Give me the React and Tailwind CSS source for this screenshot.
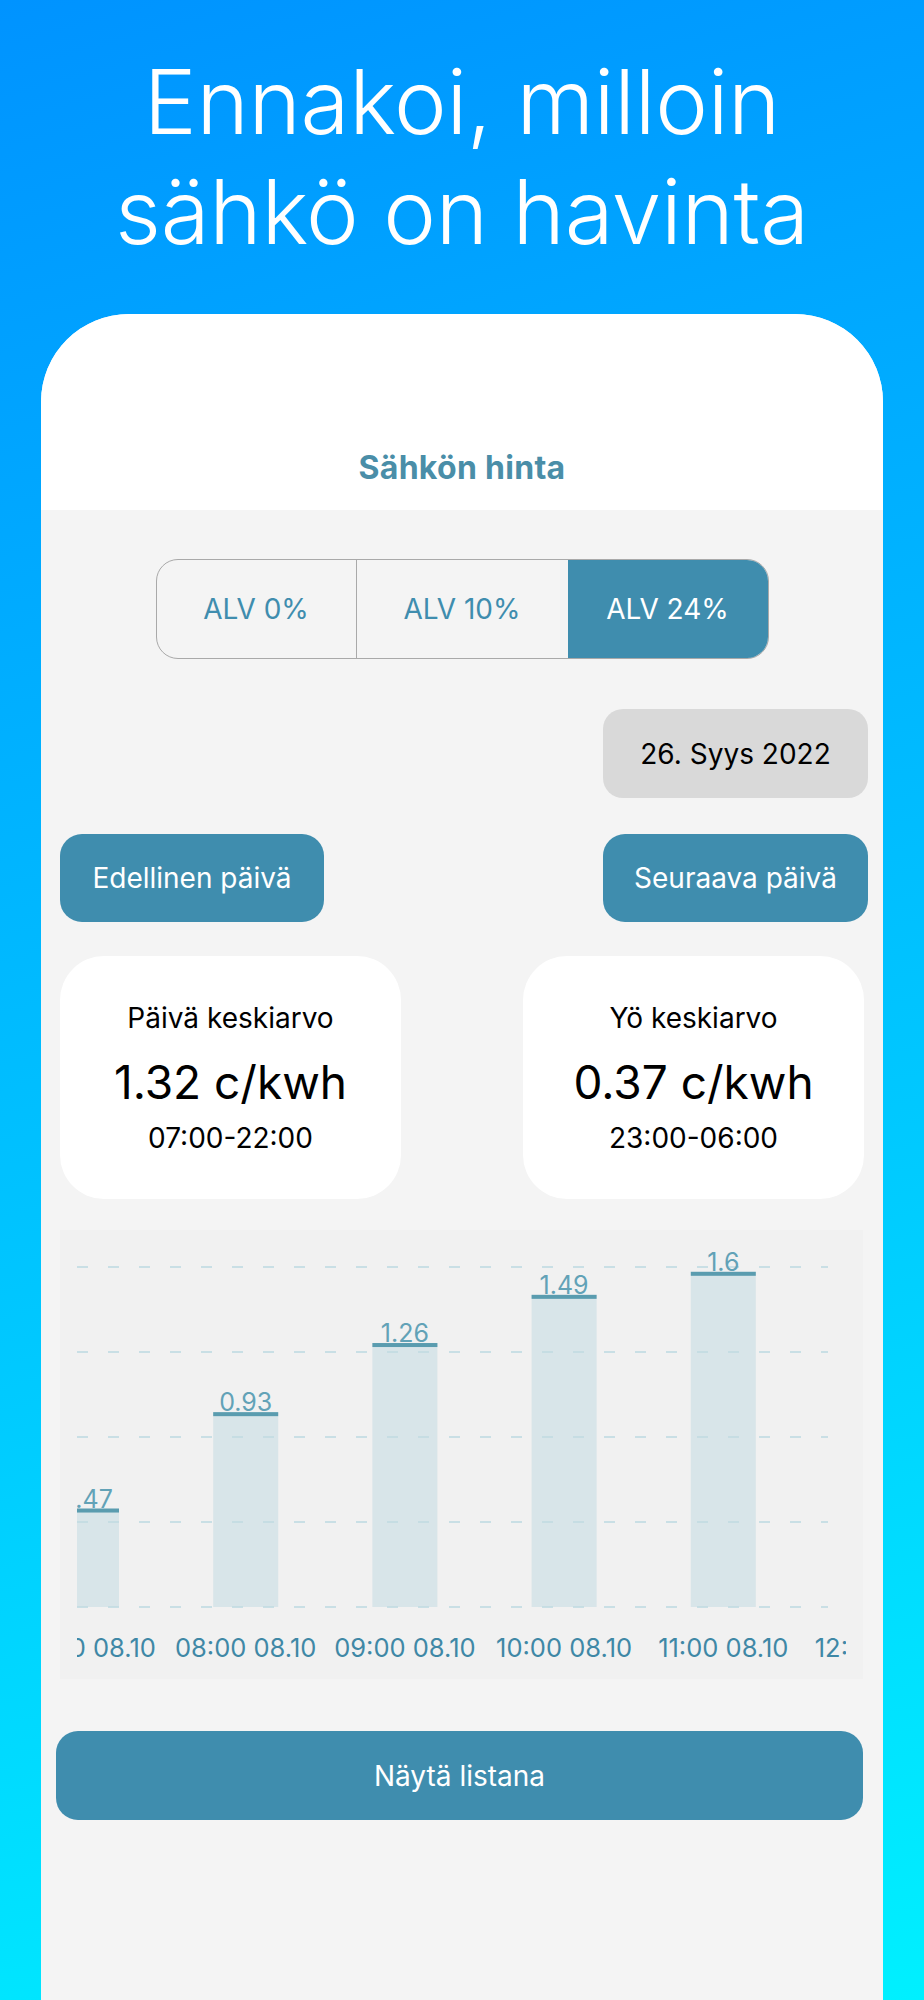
/**
 * Electricity price screen — marketing mockup
 */

const bars = [
  { label: "07:00 08.10", value: 0.47 },
  { label: "08:00 08.10", value: 0.93 },
  { label: "09:00 08.10", value: 1.26 },
  { label: "10:00 08.10", value: 1.49 },
  { label: "11:00 08.10", value: 1.6 },
  { label: "12:00 08.10", value: null },
];

function PriceChart() {
  const base = 377;
  const unit = 209.5;
  const gridY = [37, 122, 207, 292, 377];

  return (
    <svg width="803" height="449" viewBox="0 0 803 449" className="block">
      <defs>
        <clipPath id="plot">
          <rect x="17" y="0" width="769" height="449" />
        </clipPath>
      </defs>
      {gridY.map((y) => (
        <line key={y} x1="17" x2="768" y1={y} y2={y} stroke="#c9dfe5" strokeWidth="2" strokeDasharray="11 20" />
      ))}
      <g clipPath="url(#plot)">
        {bars.map((b, i) => {
          const cx = 26.5 + i * 159.2;
          if (b.value == null) {
            return (
              <text key={i} x={cx} y="427" textAnchor="middle" fontSize="25.5" fill="#3f88a6">
                {b.label}
              </text>
            );
          }
          const top = base - b.value * unit;
          return (
            <g key={i}>
              <rect x={cx - 32.5} y={top} width="65" height={base - top} fill="#c2dbe2" fillOpacity="0.55" />
              <rect x={cx - 32.5} y={top} width="65" height="4" fill="#5a9caf" />
              <text x={cx} y={top - 1} textAnchor="middle" fontSize="25" fill="#62a2b7">
                {String(b.value)}
              </text>
              <text x={cx} y="427" textAnchor="middle" fontSize="25.5" fill="#3f88a6">
                {b.label}
              </text>
            </g>
          );
        })}
      </g>
    </svg>
  );
}

function StatCard({ title, value, hours }) {
  return (
    <div className="w-[341px] h-[243px] bg-white rounded-[44px] flex flex-col items-center justify-center text-black">
      <div className="text-[28px] leading-[32px]">{title}</div>
      <div className="text-[46px] leading-[56px] mt-[20px]">{value}</div>
      <div className="text-[28px] leading-[32px] mt-[12px]">{hours}</div>
    </div>
  );
}

export default function App() {
  return (
    <div
      className="w-[924px] h-[2000px] overflow-hidden bg-[linear-gradient(165deg,#0093ff_0%,#00c8ff_60%,#00f0ff_100%)]"
      style={{ fontFamily: "Inter, 'Noto Sans', sans-serif" }}
    >
      {/* Headline */}
      <h1 className="pt-[47px] text-center text-white font-light text-[89px] leading-[110px] tracking-[-0.3px]">
        Ennakoi, milloin
        <br />
        sähkö on havinta
      </h1>

      {/* Phone card */}
      <div className="mx-[41px] mt-[47px] h-[1686px] rounded-t-[88px] bg-[#f4f4f4] overflow-hidden flex flex-col">
        <div className="bg-white pt-[136px] pb-[24px] text-center">
          <h2 className="text-[32px] leading-[36px] font-bold text-[#4a8ea8] tracking-[0.3px]">Sähkön hinta</h2>
        </div>

        {/* VAT selector */}
        <div className="mt-[49px] self-center flex h-[100px] rounded-[22px] border border-[#a9a9a9] overflow-hidden text-[28px]">
          <div className="w-[200px] flex items-center justify-center text-[#3f8dae] border-r border-[#a9a9a9]">ALV 0%</div>
          <div className="w-[211px] flex items-center justify-center text-[#3f8dae]">ALV 10%</div>
          <div className="w-[200px] flex items-center justify-center bg-[#3f8dae] text-white">ALV 24%</div>
        </div>

        {/* Date */}
        <div className="mt-[50px] mr-[15px] self-end w-[265px] h-[89px] rounded-[20px] bg-[#d9d9d9] flex items-center justify-center text-[28px] text-black">
          26. Syys 2022
        </div>

        {/* Day navigation */}
        <div className="mt-[36px] pl-[19px] pr-[15px] flex justify-between">
          <button className="w-[264px] h-[88px] rounded-[22px] bg-[#3f8dae] text-white text-[28px]">Edellinen päivä</button>
          <button className="w-[265px] h-[88px] rounded-[22px] bg-[#3f8dae] text-white text-[28px]">Seuraava päivä</button>
        </div>

        {/* Averages */}
        <div className="mt-[34px] pl-[19px] pr-[19px] flex justify-between">
          <StatCard title="Päivä keskiarvo" value="1.32 c/kwh" hours="07:00-22:00" />
          <StatCard title="Yö keskiarvo" value="0.37 c/kwh" hours="23:00-06:00" />
        </div>

        {/* Chart */}
        <div className="mt-[31px] ml-[19px] w-[803px] h-[449px] bg-[#f1f1f1]">
          <PriceChart />
        </div>

        <button className="mt-[52px] ml-[15px] w-[807px] h-[89px] rounded-[22px] bg-[#3f8dae] text-white text-[28px]">
          Näytä listana
        </button>
      </div>
    </div>
  );
}
